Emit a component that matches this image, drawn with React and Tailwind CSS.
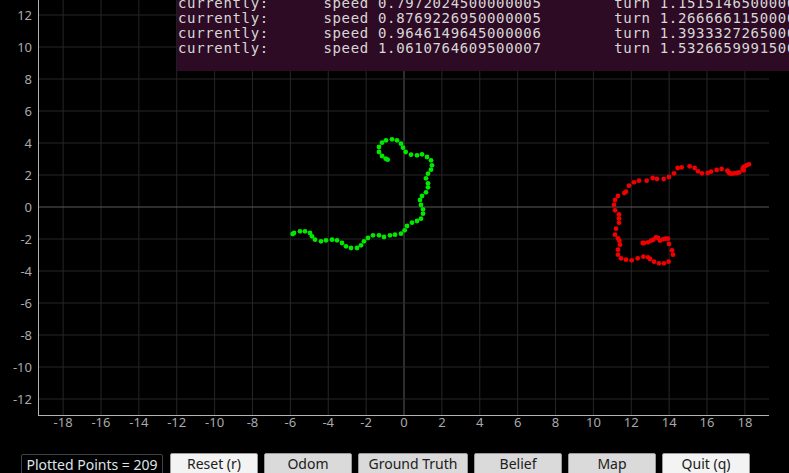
import React from 'react';

const X0 = 404, XU = 18.94;   // px of x=0, px per unit
const Y0 = 207, YU = 16;
const LEFT = 38, RIGHT = 769, BOTTOM = 415;

const xTicks = [-18, -16, -14, -12, -10, -8, -6, -4, -2, 0, 2, 4, 6, 8, 10, 12, 14, 16, 18];
const yTicks = [12, 10, 8, 6, 4, 2, 0, -2, -4, -6, -8, -10, -12];

// zoomed trace coords (3x) -> page px
const greenRaw = [
  [353,89],[347,86],[336,78],[327,66],[327,51],[336,38],[348,31],[366,28],[381,31],[393,41],
  [399,53],[407,66],[423,74],[441,76],[456,73],[471,81],[483,91],[486,106],[483,119],[474,131],
  [468,145],[474,160],[474,172],[468,187],[456,198],[450,210],[453,225],[459,238],[459,251],[453,266],
  [441,273],[426,278],[411,288],[404,301],[393,311],[375,314],[360,316],[342,321],[327,316],[309,316],
  [294,324],[282,334],[273,346],[261,354],[243,354],[228,349],[216,339],[201,331],[186,329],[168,331],
  [153,334],[135,329],[126,319],[120,309],[105,304],[90,304],[72,309],[68,312],
];
const redRaw = [
  [447,43],[440,46],[434,49],[430,52],[428,57],[431,61],[418,67],[411,69],[403,70],[395,71],
  [388,70],[385,65],[382,62],[365,57],[350,60],[333,65],[323,69],[306,70],[294,64],[284,54],
  [269,49],[245,52],[233,54],[222,70],[207,81],[191,87],[171,87],[158,84],[140,92],[117,92],
  [102,97],[87,107],[78,125],[73,129],[54,138],[45,150],[42,165],[45,181],[57,193],[57,205],
  [57,218],[48,236],[45,254],[54,265],[58,272],[60,284],[54,299],[54,314],[63,325],[78,329],
  [95,331],[113,325],[130,320],[144,322],[150,327],[162,335],[177,340],[192,340],[206,335],[219,314],
  [216,301],[207,282],[204,266],[197,266],[189,268],[180,272],[174,264],[168,262],[160,269],[153,272],
  [144,277],[132,279],[128,279],
];
const green = greenRaw.map(([x, y]) => [270 + x / 3, 130 + y / 3]);
const red = redRaw.map(([x, y]) => [600 + x / 3, 150 + y / 3]);

const lines = [
  'currently:      speed 0.7972024500000005        turn 1.1515146500000005',
  'currently:      speed 0.8769226950000005        turn 1.2666661150000006',
  'currently:      speed 0.9646149645000006        turn 1.3933327265000007',
  'currently:      speed 1.0610764609500007        turn 1.5326659991500008',
];

function Chart() {
  return (
    <svg width="789" height="453" className="block" style={{ fontFamily: '"Noto Sans", sans-serif' }}>
      {xTicks.map(t => (
        <line key={'gx' + t} x1={X0 + t * XU} x2={X0 + t * XU} y1={0} y2={BOTTOM}
          stroke={t === 0 ? '#5a5a5a' : '#262626'} strokeWidth="1" />
      ))}
      {yTicks.concat([14]).map(t => (
        <line key={'gy' + t} x1={LEFT} x2={RIGHT} y1={Y0 - t * YU} y2={Y0 - t * YU}
          stroke={t === 0 ? '#5a5a5a' : '#262626'} strokeWidth="1" />
      ))}
      <line x1={LEFT + 0.5} x2={LEFT + 0.5} y1={0} y2={BOTTOM} stroke="#b4b4b4" />
      <line x1={LEFT} x2={RIGHT} y1={BOTTOM + 0.5} y2={BOTTOM + 0.5} stroke="#b4b4b4" />

      {yTicks.map(t => (
        <text key={'ly' + t} x={32} y={Y0 - t * YU + 4.5} textAnchor="end" fontSize="13" fill="#a9a9ac">{t}</text>
      ))}
      {xTicks.map(t => (
        <text key={'lx' + t} x={X0 + t * XU} y={427} textAnchor="middle" fontSize="13" fill="#a9a9ac">{t}</text>
      ))}

      {green.map(([x, y], i) => <circle key={'g' + i} cx={x} cy={y} r="2.4" fill="#00e800" />)}
      {red.map(([x, y], i) => <circle key={'r' + i} cx={x} cy={y} r="2.4" fill="#f00000" />)}
    </svg>
  );
}

function Btn({ children, light, w = 'w-[88px]' }) {
  return (
    <div className={`${w} h-[26px] shrink-0 border border-[#9a9a9a] rounded-[2px] flex items-center justify-center text-[14px] text-[#202020] pb-[6px] ${light ? 'bg-[#f3f3f3]' : 'bg-[#dadada]'}`}>
      {children}
    </div>
  );
}

export default function App() {
  return (
    <div className="relative w-[789px] h-[473px] overflow-hidden bg-black" style={{ fontFamily: '"Noto Sans", sans-serif' }}>
      <Chart />

      {/* terminal overlay */}
      <div className="absolute left-[177px] top-0 w-[640px] h-[71px] bg-[#2e0b24] overflow-hidden">
        <div className="mt-[-4px] ml-[1px] text-[14px] leading-[15px] tracking-[0.66px] text-[#d8d8d8] whitespace-pre"
          style={{ fontFamily: '"DejaVu Sans Mono", monospace' }}>
          {lines.map((l, i) => <div key={i}>{l}</div>)}
        </div>
      </div>

      {/* bottom bar */}
      <div className="flex items-start">
        <div className="ml-[21px] mt-[1px] w-[142px] h-[26px] border border-[#3c434a] rounded-[2px] flex items-center justify-center text-[14px] text-[#dde3ea] pb-[6px]">
          Plotted Points = 209
        </div>
        <div className="flex gap-[6px] ml-[7px]">
          <Btn light>Reset (r)</Btn>
          <Btn>Odom</Btn>
          <Btn w="w-[110px]">Ground Truth</Btn>
          <Btn>Belief</Btn>
          <Btn>Map</Btn>
          <Btn light>Quit (q)</Btn>
        </div>
      </div>
    </div>
  );
}
